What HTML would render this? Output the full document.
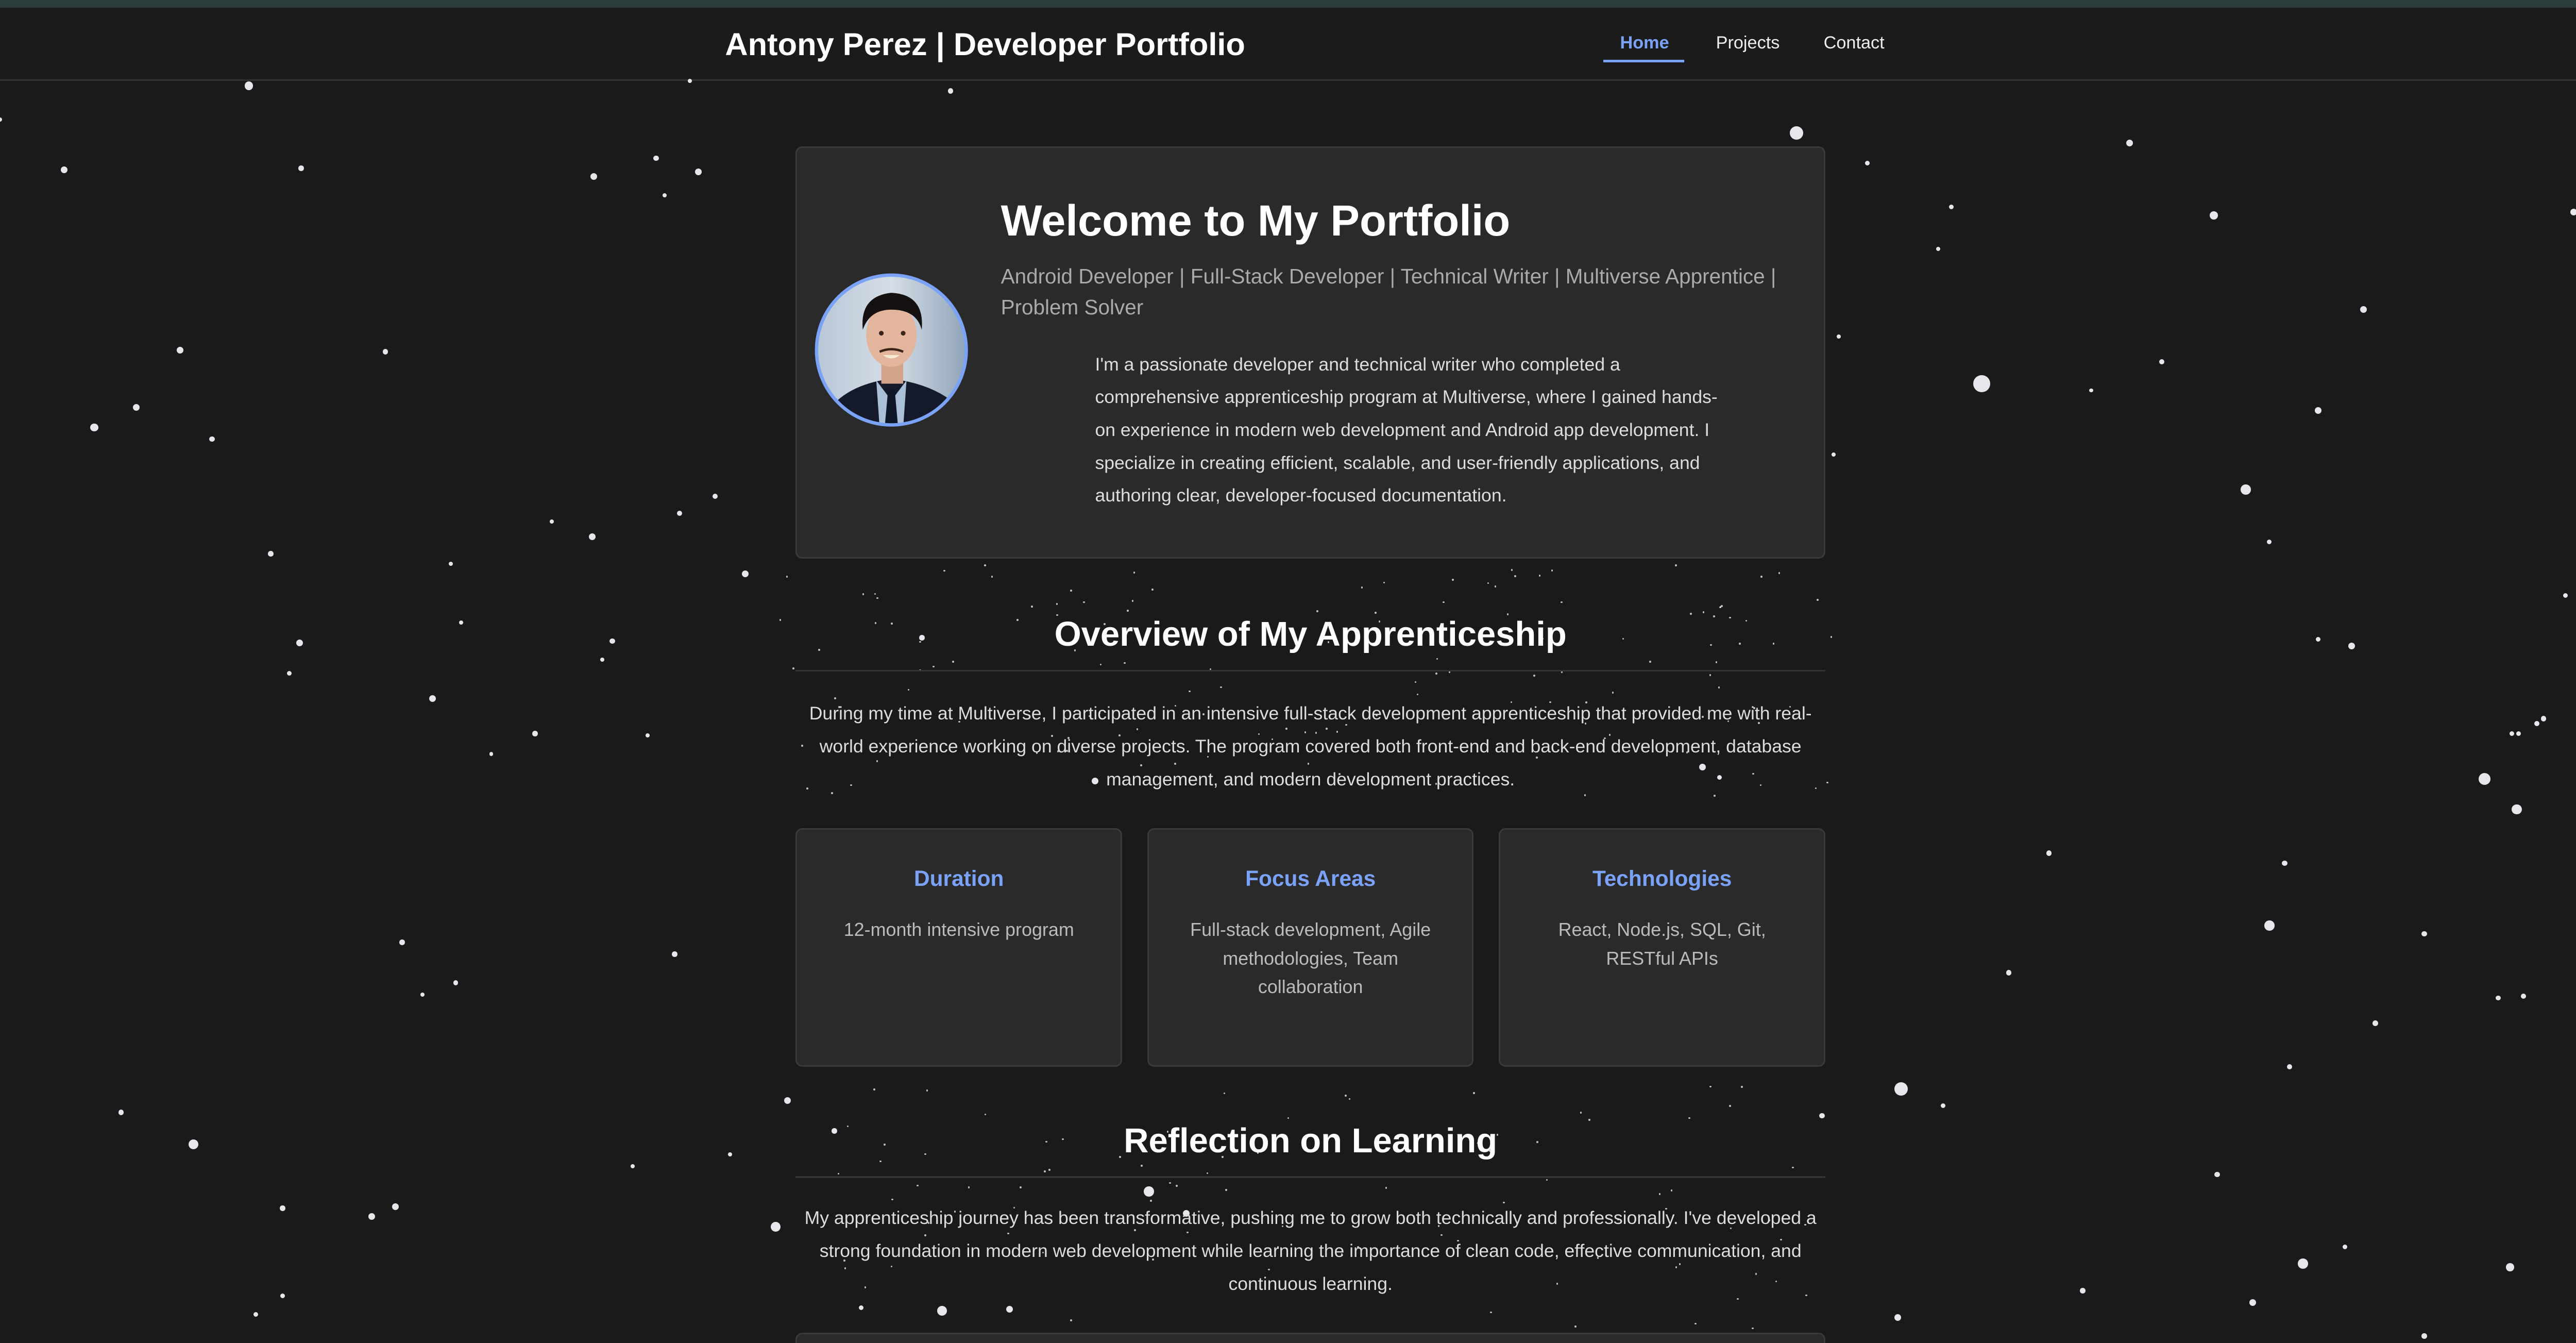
<!DOCTYPE html>
<html><head><meta charset="utf-8"><style>
html,body{margin:0;padding:0;background:#1a1a1a;overflow:hidden}
#root{position:relative;width:1568px;height:798px;zoom:3.26531;font-family:"Liberation Sans",sans-serif;color:#ddd;overflow:hidden;background:#1a1a1a}
.top{position:absolute;left:0;top:0;width:1568px;height:4.6px;background:#2c3d3d}
.hdr{position:absolute;left:0;top:4.6px;width:1559px;height:42.5px;background:#1b1b1b;border-bottom:1px solid #333}
.title{position:absolute;left:431px;top:11px;font-size:18.8px;font-weight:bold;color:#fff;white-space:nowrap}
.nav{position:absolute;top:15px;font-size:10.5px;color:#eee}
.star{position:absolute;background:#e8e6ec;border-radius:50%}
.card{position:absolute;background:#2a2a2a;border:1px solid #3a3a3a;border-radius:4px;box-sizing:border-box}
h2{position:absolute;margin:0;left:473px;width:612px;text-align:center;font-size:20.5px;color:#fff;font-weight:bold}
.hr{position:absolute;left:473px;width:612px;height:1px;background:#333}
.p{position:absolute;left:473px;width:612px;text-align:center;font-size:10.9px;line-height:19.6px;color:#ddd}
.ct{position:absolute;left:0;right:0;text-align:center;top:22px;font-size:13px;font-weight:bold;color:#7aa2f7}
.cb{position:absolute;left:18px;right:18px;text-align:center;top:51px;font-size:11px;line-height:17px;color:#bbb}
.sb{position:absolute;left:1559px;top:4.6px;width:9px;height:794px;background:#2b2b2b}
.th{position:absolute;left:1561.3px;top:6.5px;width:5px;height:484px;background:#686868;border-radius:3px}
</style></head><body><div id="root">
<div class="top"></div>
<div class="hdr">
<div class="title">Antony Perez&nbsp;|&nbsp;Developer Portfolio</div>
<div class="nav" style="left:963px;color:#7aa2f7;font-weight:bold">Home</div>
<div style="position:absolute;left:953px;top:31px;width:48px;height:1.5px;background:#7aa2f7"></div>
<div class="nav" style="left:1020px">Projects</div>
<div class="nav" style="left:1084px">Contact</div>
</div>
<div id="stars"></div>
<div class="card" style="left:473px;top:87px;width:612px;height:245px">
<svg style="position:absolute;left:10px;top:74px" width="92" height="92" viewBox="0 0 92 92">
<defs><clipPath id="c"><circle cx="46" cy="46" r="44"/></clipPath><linearGradient id="bg" x1="0" x2="1"><stop offset="0" stop-color="#b7c6d6"/><stop offset=".5" stop-color="#d5dde6"/><stop offset="1" stop-color="#8ea3b8"/></linearGradient></defs>
<g clip-path="url(#c)">
<rect width="92" height="92" fill="url(#bg)"/>
<path d="M10 80 Q20 68 40 64 L52 64 Q74 68 86 80 L86 92 L6 92Z" fill="#141a2a"/>
<path d="M37 64 L46 76 L55 64 L53 92 L39 92Z" fill="#a9c0d8"/>
<path d="M44 70 L48 70 L50 92 L42 92Z" fill="#0f1628"/>
<rect x="40" y="52" width="13" height="14" fill="#d2a489"/>
<ellipse cx="46" cy="37" rx="15" ry="19" fill="#e2b59c"/>
<path d="M29 34 Q27 14 46 12 Q66 13 64 34 Q61 22 46 22 Q33 22 29 34Z" fill="#151110"/>
<circle cx="40" cy="36" r="1.4" fill="#3a2418"/><circle cx="53" cy="36" r="1.4" fill="#3a2418"/>
<path d="M39 47 Q46 44 53 47" stroke="#3a2418" stroke-width="1.4" fill="none"/>
<path d="M41 49 Q46 53 51 49Z" fill="#f4ead2"/>
</g>
<circle cx="46" cy="46" r="44.5" fill="none" stroke="#7aa2f7" stroke-width="2"/>
</svg>
<div style="position:absolute;left:121px;top:28px;font-size:26px;font-weight:bold;color:#fff;white-space:nowrap">Welcome to My Portfolio</div>
<div style="position:absolute;left:121px;top:67px;width:475px;font-size:12.4px;line-height:18.5px;color:#aaa">Android Developer | Full-Stack Developer | Technical Writer | Multiverse Apprentice | Problem Solver</div>
<div style="position:absolute;left:177px;top:119px;width:375px;font-size:10.9px;line-height:19.5px;color:#ddd">I'm a passionate developer and technical writer who completed a comprehensive apprenticeship program at Multiverse, where I gained hands-on experience in modern web development and Android app development. I specialize in creating efficient, scalable, and user-friendly applications, and authoring clear, developer-focused documentation.</div>
</div>
<h2 style="top:365px">Overview of My Apprenticeship</h2>
<div class="hr" style="top:398px"></div>
<div class="p" style="top:414px">During my time at Multiverse, I participated in an intensive full-stack development apprenticeship that provided me with real-world experience working on diverse projects. The program covered both front-end and back-end development, database management, and modern development practices.</div>
<div class="card" style="left:473px;top:492px;width:194px;height:142px"><div class="ct">Duration</div><div class="cb">12-month intensive program</div></div>
<div class="card" style="left:682px;top:492px;width:194px;height:142px"><div class="ct">Focus Areas</div><div class="cb">Full-stack development, Agile methodologies, Team collaboration</div></div>
<div class="card" style="left:891px;top:492px;width:194px;height:142px"><div class="ct">Technologies</div><div class="cb">React, Node.js, SQL, Git, RESTful APIs</div></div>
<h2 style="top:666px">Reflection on Learning</h2>
<div class="hr" style="top:699px"></div>
<div class="p" style="top:714px">My apprenticeship journey has been transformative, pushing me to grow both technically and professionally. I've developed a strong foundation in modern web development while learning the importance of clean code, effective communication, and continuous learning.</div>
<div class="card" style="left:473px;top:792px;width:612px;height:20px"></div>
<div class="sb"></div><div class="th"></div>
<script>
var s=[[148,51,2.5],[38,101,2],[179,100,1.6],[353,105,2],[390,94,1.6],[415,102,2],[395,116,1.2],[410,48,1.2],[565,54,1.6],[1068,79,4],[1110,97,1.4],[1266,85,2],[1160,123,1.4],[1152,148,1.2],[1316,128,2.4],[1530,126,2],[1405,184,2],[1178,228,5],[1285,215,1.6],[1243,232,1.2],[1378,244,2],[1093,200,1.2],[1090,270,1.2],[1335,291,3],[1349,322,1.4],[1525,354,1.4],[1378,380,1.4],[1398,384,2],[1477,463,3.5],[1496,481,3],[1493,436,1.4],[1497,436,1.4],[1508,430,1.6],[1512,427,1.6],[1218,507,1.6],[1358,513,1.6],[1349,550,3],[1441,555,1.6],[1194,578,1.6],[1485,593,1.4],[1500,592,1.6],[1412,608,1.6],[1361,634,1.6],[1130,647,4],[1155,657,1.4],[1083,663,1.6],[1318,698,1.6],[1394,741,1.4],[1369,751,3],[1492,753,2.4],[1238,767,1.6],[1339,774,2],[1128,783,2],[1441,794,1.6],[107,208,2],[229,209,1.6],[81,242,2],[56,254,2.4],[126,261,1.6],[328,310,1.2],[352,319,2],[404,305,1.6],[425,295,1.6],[161,329,1.6],[268,335,1.2],[443,341,2],[274,370,1.2],[178,382,2],[364,381,1.6],[172,400,1.4],[358,392,1.2],[257,415,2],[318,436,1.6],[385,437,1.2],[292,448,1.2],[239,560,1.6],[271,584,1.4],[251,591,1.2],[401,567,1.6],[72,661,1.6],[115,680,3],[434,686,1.2],[376,693,1.2],[468,654,2],[496,672,1.6],[168,718,1.6],[235,717,2],[221,723,2],[461,729,3],[683,708,3],[705,721,2],[560,779,3],[600,778,2],[512,777,1.4],[168,770,1.4],[152,781,1.4],[651,464,2],[1012,456,2],[548,379,1.6],[1022,462,1.4],[0,71,1.2]];
var h='';s.forEach(function(a){h+='<div class="star" style="left:'+(a[0]-a[2])+'px;top:'+(a[1]-a[2])+'px;width:'+2*a[2]+'px;height:'+2*a[2]+'px"></div>'});
var r=12345;function R(){r=(r*16807)%2147483647;return r/2147483647}
for(var i=0;i<140;i++){var x=460+R()*630,y=335+R()*140;h+='<div class="star" style="left:'+x+'px;top:'+y+'px;width:1.1px;height:1.1px;opacity:.8"></div>'}
for(var i=0;i<90;i++){var x=480+R()*600,y=640+R()*150;h+='<div class="star" style="left:'+x+'px;top:'+y+'px;width:1.1px;height:1.1px;opacity:.8"></div>'}
document.getElementById('stars').innerHTML=h;
</script>
</div></body></html>
